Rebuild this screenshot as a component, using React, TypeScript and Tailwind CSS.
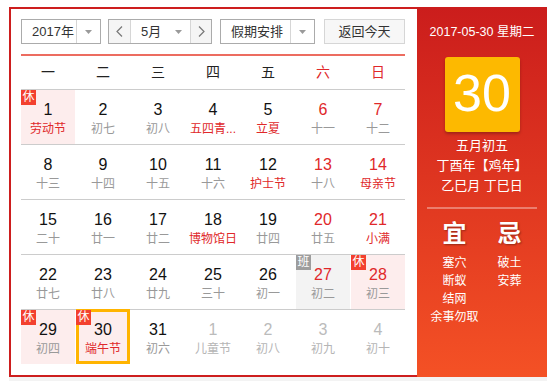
import React from 'react';

type Cell = {
  d: number;
  l: string;
  numRed?: boolean;
  lunarRed?: boolean;
  badge?: '休' | '班';
  bg?: 'pink' | 'gray';
  out?: boolean;
  today?: boolean;
};

const rows: Cell[][] = [
  [
    { d: 1, l: '劳动节', lunarRed: true, badge: '休', bg: 'pink' },
    { d: 2, l: '初七' },
    { d: 3, l: '初八' },
    { d: 4, l: '五四青...', lunarRed: true },
    { d: 5, l: '立夏', lunarRed: true },
    { d: 6, l: '十一', numRed: true },
    { d: 7, l: '十二', numRed: true },
  ],
  [
    { d: 8, l: '十三' },
    { d: 9, l: '十四' },
    { d: 10, l: '十五' },
    { d: 11, l: '十六' },
    { d: 12, l: '护士节', lunarRed: true },
    { d: 13, l: '十八', numRed: true },
    { d: 14, l: '母亲节', numRed: true, lunarRed: true },
  ],
  [
    { d: 15, l: '二十' },
    { d: 16, l: '廿一' },
    { d: 17, l: '廿二' },
    { d: 18, l: '博物馆日', lunarRed: true },
    { d: 19, l: '廿四' },
    { d: 20, l: '廿五', numRed: true },
    { d: 21, l: '小满', numRed: true, lunarRed: true },
  ],
  [
    { d: 22, l: '廿七' },
    { d: 23, l: '廿八' },
    { d: 24, l: '廿九' },
    { d: 25, l: '三十' },
    { d: 26, l: '初一' },
    { d: 27, l: '初二', numRed: true, badge: '班', bg: 'gray' },
    { d: 28, l: '初三', numRed: true, badge: '休', bg: 'pink' },
  ],
  [
    { d: 29, l: '初四', badge: '休', bg: 'pink' },
    { d: 30, l: '端午节', lunarRed: true, badge: '休', bg: 'pink', today: true },
    { d: 31, l: '初六' },
    { d: 1, l: '儿童节', out: true },
    { d: 2, l: '初八', out: true },
    { d: 3, l: '初九', out: true },
    { d: 4, l: '初十', out: true },
  ],
];

const weekdays = ['一', '二', '三', '四', '五', '六', '日'];

function Tri() {
  return (
    <svg width="7" height="4" viewBox="0 0 7 4">
      <polygon points="0,0 7,0 3.5,4" fill="#9a9a9a" />
    </svg>
  );
}

function Chev({ dir }: { dir: 'l' | 'r' }) {
  return (
    <svg width="7" height="11" viewBox="0 0 7 11">
      <polyline
        points={dir === 'l' ? '6,0.5 1,5.5 6,10.5' : '1,0.5 6,5.5 1,10.5'}
        fill="none"
        stroke="#777"
        strokeWidth="1.2"
      />
    </svg>
  );
}

function DayCell({ c }: { c: Cell }) {
  const bg = c.bg === 'pink' ? 'bg-[#fdeded]' : c.bg === 'gray' ? 'bg-[#f3f3f3]' : '';
  const numColor = c.out ? 'text-[#bbbbbb]' : c.numRed ? 'text-[#e0282a]' : 'text-[#111111]';
  const lunarColor = c.out ? 'text-[#b5b5b5]' : c.lunarRed ? 'text-[#e0282a]' : 'text-[#999999]';
  return (
    <div className={`relative h-[54px] flex flex-col items-center pt-[11px] ${bg}`}>
      {c.today && (
        <div className="absolute left-0 right-0 -top-px bottom-0 border-[3px] border-[#ffb400]" />
      )}
      {c.badge && (
        <div
          className={`absolute left-0 top-0 w-[15px] h-[15px] text-[12px] leading-[15px] text-center text-white ${
            c.badge === '休' ? 'bg-[#f3402e]' : 'bg-[#9d9d9d]'
          }`}
        >
          {c.badge}
        </div>
      )}
      <div className={`relative text-[16px] leading-[18px] ${numColor}`}>{c.d}</div>
      <div className={`relative mt-[2px] text-[12px] leading-[16px] whitespace-nowrap ${lunarColor}`}>{c.l}</div>
    </div>
  );
}

export default function App() {
  return (
    <div
      className="w-[550px] h-[381px] bg-white overflow-hidden"
      style={{ fontFamily: '"Liberation Sans", "Noto Sans CJK SC", sans-serif' }}
    >
      <div className="ml-[9px] pt-[7px] flex w-[538px]">
        <div className="w-[408px] h-[370px] border-2 border-r-0 border-[#cd1e1e] pl-[10px] pr-[12px] pt-[10px]">
          <div className="flex h-[25px] text-[13px] text-[#333]">
            <div className="w-[80px] flex border border-[#ababab] bg-white">
              <div className="flex-1 pl-[10px] flex items-center">2017年</div>
              <div className="w-[24px] border-l border-[#d6d6d6] flex items-center justify-center">
                <Tri />
              </div>
            </div>
            <div className="ml-[7px] w-[104px] flex border border-[#ababab] bg-white">
              <div className="w-[22px] bg-[#f5f5f5] border-r border-[#d6d6d6] flex items-center justify-center">
                <Chev dir="l" />
              </div>
              <div className="flex-1 flex items-center justify-between pl-[10px] pr-[8px]">
                <span>5月</span>
                <Tri />
              </div>
              <div className="w-[21px] bg-[#f5f5f5] border-l border-[#d6d6d6] flex items-center justify-center">
                <Chev dir="r" />
              </div>
            </div>
            <div className="ml-[8px] w-[95px] flex border border-[#ababab] bg-white">
              <div className="flex-1 pl-[10px] flex items-center">假期安排</div>
              <div className="w-[24px] border-l border-[#d6d6d6] flex items-center justify-center">
                <Tri />
              </div>
            </div>
            <div className="ml-[9px] w-[81px] flex items-center justify-center border border-[#d6d6d6] bg-[#f7f7f7]">
              返回今天
            </div>
          </div>
          <div className="mt-[10px] h-[2px] bg-[#ec6c60]" />
          <div className="grid grid-cols-[repeat(7,54px)] gap-x-px h-[34px] border-b border-[#cccccc] items-center text-center text-[14px]">
            {weekdays.map((w, i) => (
              <div key={w} className={i >= 5 ? 'text-[#e0282a]' : 'text-[#222]'}>
                {w}
              </div>
            ))}
          </div>
          {rows.map((r, ri) => (
            <div
              key={ri}
              className={`grid grid-cols-[repeat(7,54px)] gap-x-px ${
                ri < rows.length - 1 ? 'border-b border-[#cccccc]' : ''
              }`}
            >
              {r.map((c, ci) => (
                <DayCell key={ci} c={c} />
              ))}
            </div>
          ))}
        </div>
        <div className="w-[130px] h-[370px] flex flex-col items-center text-white bg-[linear-gradient(to_bottom,#cb1d1c,#f45125)]">
          <div className="mt-[15px] text-[12.5px] leading-[20px] whitespace-nowrap">2017-05-30 星期二</div>
          <div className="mt-[15px] w-[75px] h-[75px] rounded-[3px] bg-[#fdb900] shadow-[0_2px_3px_rgba(0,0,0,0.25)] flex items-center justify-center pb-[3px] text-[52px] leading-none">
            30
          </div>
          <div className="mt-[4px] text-[13px] leading-[20px] text-center whitespace-nowrap">
            <div>五月初五</div>
            <div>丁酉年【鸡年】</div>
            <div>乙巳月 丁巳日</div>
          </div>
          <div className="mt-[11px] w-[110px] h-[2px] bg-white/35" />
          <div className="mt-[10px] grid grid-cols-[55px_55px] text-center">
            <div>
              <div className="text-[24px] leading-[30px] font-bold [text-shadow:1px_1px_2px_rgba(0,0,0,0.35)]">宜</div>
              <div className="mt-[5px] text-[12px] leading-[18px] whitespace-nowrap">
                <div>塞穴</div>
                <div>断蚁</div>
                <div>结网</div>
                <div>余事勿取</div>
              </div>
            </div>
            <div>
              <div className="text-[24px] leading-[30px] font-bold [text-shadow:1px_1px_2px_rgba(0,0,0,0.35)]">忌</div>
              <div className="mt-[5px] text-[12px] leading-[18px] whitespace-nowrap">
                <div>破土</div>
                <div>安葬</div>
              </div>
            </div>
          </div>
        </div>
      </div>
      <div className="ml-[9px] w-[538px] h-[4px] bg-[#f3f3f3]" />
    </div>
  );
}
